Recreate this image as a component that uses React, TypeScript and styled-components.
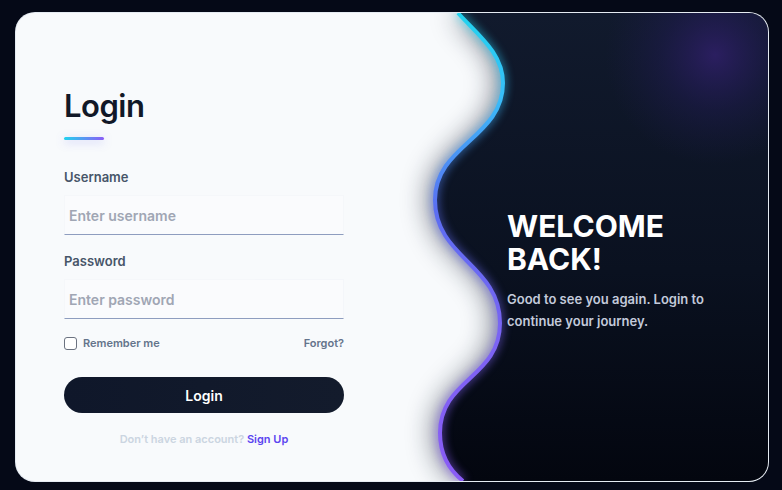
import React from 'react';
import styled, { createGlobalStyle } from 'styled-components';

const GlobalStyle = createGlobalStyle`
  html, body {
    margin: 0;
    padding: 0;
    background: #050917;
  }
  body {
    font-family: Inter, 'Noto Sans', sans-serif;
  }
`;

const Page = styled.div`
  padding: 12px 0 0 15px;
  height: 490px;
  box-sizing: border-box;
`;

const Card = styled.div`
  display: grid;
  grid-template-columns: 410px 1fr;
  width: 754px;
  height: 470px;
  box-sizing: border-box;
  border: 1px solid rgba(226, 232, 240, 0.85);
  border-radius: 20px;
  overflow: hidden;
  background: #f8fafc;
`;

const FormSide = styled.div`
  padding: 74px 0 0 48px;
  display: flex;
  flex-direction: column;
`;

const Heading = styled.h1`
  margin: 0;
  font-size: 31px;
  line-height: 38px;
  font-weight: 600;
  color: #111827;
  letter-spacing: -0.5px;
`;

const Underline = styled.div`
  width: 40px;
  height: 3px;
  margin-top: 12px;
  border-radius: 2px;
  background: linear-gradient(90deg, #22d3ee, #8b5cf6);
  box-shadow: 0 2px 10px rgba(99, 102, 241, 0.35);
`;

const Field = styled.div<{ $top: number }>`
  display: flex;
  flex-direction: column;
  width: 280px;
  margin-top: ${({ $top }) => $top}px;
`;

const Label = styled.label`
  font-size: 13px;
  line-height: 16px;
  font-weight: 600;
  color: #475569;
  margin-bottom: 10px;
`;

const Input = styled.input`
  height: 40px;
  box-sizing: border-box;
  padding: 0 4px;
  border: 1px solid rgba(226, 232, 240, 0.22);
  border-bottom: 1px solid #8e9dbf;
  background: rgba(255, 255, 255, 0.3);
  font-family: inherit;
  font-size: 14px;
  font-weight: 600;
  color: #111827;
  outline: none;

  &::placeholder {
    color: #a0a6b4;
  }
`;

const OptionsRow = styled.div`
  display: flex;
  align-items: center;
  justify-content: space-between;
  width: 280px;
  margin-top: 16px;
  height: 16px;
`;

const Remember = styled.label`
  display: flex;
  align-items: center;
  gap: 6px;
  font-size: 11px;
  font-weight: 600;
  color: #64748b;
`;

const Check = styled.input`
  appearance: none;
  margin: 0;
  width: 13px;
  height: 13px;
  box-sizing: border-box;
  border: 1.5px solid #6b7280;
  border-radius: 3px;
  background: #fff;
`;

const Forgot = styled.a`
  font-size: 11px;
  font-weight: 600;
  color: #64748b;
  text-decoration: none;
`;

const LoginButton = styled.button`
  width: 280px;
  height: 36px;
  margin-top: 26px;
  border: none;
  border-radius: 18px;
  background: linear-gradient(90deg, #0f172a, #131b2c);
  color: #fff;
  font-family: inherit;
  font-size: 14px;
  font-weight: 600;
`;

const Footer = styled.p`
  width: 280px;
  margin: 19px 0 0;
  text-align: center;
  font-size: 11px;
  line-height: 14px;
  font-weight: 600;
  color: #cbd5e1;
`;

const SignUp = styled.a`
  color: #5b45f0;
  text-decoration: none;
`;

const WelcomeSide = styled.div`
  position: relative;
  padding: 197px 0 0 81px;
`;

const Wave = styled.svg`
  position: absolute;
  left: 0;
  top: 0;
  overflow: visible;
`;

const WelcomeText = styled.div`
  position: relative;
`;

const WelcomeTitle = styled.h2`
  margin: 0;
  font-size: 30px;
  line-height: 33px;
  font-weight: 700;
  color: #ffffff;
`;

const WelcomeCopy = styled.p`
  margin: 12px 0 0;
  max-width: 210px;
  font-size: 13px;
  line-height: 22px;
  font-weight: 600;
  color: #c3cadb;
`;

const WAVE =
  'M32,0 C52,22 77,40 77,70 C77,125 9,132 9,187 C9,245 74,252 74,310 C74,365 14,366 14,420 C14,440 22,456 37,468';
const PANEL = `${WAVE} L342,468 L342,0 Z`;

function WaveArt() {
  return (
    <Wave width="342" height="468" viewBox="0 0 342 468">
      <defs>
        <linearGradient id="panelFill" x1="0" y1="0" x2="0" y2="468" gradientUnits="userSpaceOnUse">
          <stop offset="0" stopColor="#111a2d" />
          <stop offset="0.55" stopColor="#0a1120" />
          <stop offset="1" stopColor="#03060f" />
        </linearGradient>
        <radialGradient id="purpleGlow" cx="289" cy="42" r="110" gradientUnits="userSpaceOnUse">
          <stop offset="0" stopColor="#2e1f66" stopOpacity="0.9" />
          <stop offset="0.5" stopColor="#231c58" stopOpacity="0.4" />
          <stop offset="1" stopColor="#1e1b4b" stopOpacity="0" />
        </radialGradient>
        <linearGradient id="edge" x1="0" y1="0" x2="0" y2="468" gradientUnits="userSpaceOnUse">
          <stop offset="0" stopColor="#22d3ee" />
          <stop offset="0.18" stopColor="#38bdf8" />
          <stop offset="0.42" stopColor="#5b6ef2" />
          <stop offset="0.7" stopColor="#7b63f3" />
          <stop offset="1" stopColor="#8b5cf6" />
        </linearGradient>
        <filter id="softShadow" x="-30%" y="-10%" width="160%" height="120%" colorInterpolationFilters="sRGB">
          <feGaussianBlur stdDeviation="14" />
        </filter>
        <filter id="glow" x="-40%" y="-10%" width="180%" height="120%" colorInterpolationFilters="sRGB">
          <feGaussianBlur stdDeviation="5" result="b" />
          <feMerge>
            <feMergeNode in="b" />
            <feMergeNode in="SourceGraphic" />
          </feMerge>
        </filter>
      </defs>
      <path d={PANEL} fill="#0f172a" opacity="0.55" transform="translate(-6 0)" filter="url(#softShadow)" />
      <path d={PANEL} fill="url(#panelFill)" />
      <path d={PANEL} fill="url(#purpleGlow)" />
      <path d={WAVE} fill="none" stroke="url(#edge)" strokeWidth="4" filter="url(#glow)" />
    </Wave>
  );
}

export default function App() {
  return (
    <>
      <GlobalStyle />
      <Page>
        <Card>
          <FormSide>
            <Heading>Login</Heading>
            <Underline />
            <Field $top={29}>
              <Label>Username</Label>
              <Input placeholder="Enter username" />
            </Field>
            <Field $top={18}>
              <Label>Password</Label>
              <Input type="password" placeholder="Enter password" />
            </Field>
            <OptionsRow>
              <Remember>
                <Check type="checkbox" />
                Remember me
              </Remember>
              <Forgot href="#">Forgot?</Forgot>
            </OptionsRow>
            <LoginButton>Login</LoginButton>
            <Footer>
              Don’t have an account? <SignUp href="#">Sign Up</SignUp>
            </Footer>
          </FormSide>
          <WelcomeSide>
            <WaveArt />
            <WelcomeText>
              <WelcomeTitle>
                WELCOME
                <br />
                BACK!
              </WelcomeTitle>
              <WelcomeCopy>Good to see you again. Login to continue your journey.</WelcomeCopy>
            </WelcomeText>
          </WelcomeSide>
        </Card>
      </Page>
    </>
  );
}
